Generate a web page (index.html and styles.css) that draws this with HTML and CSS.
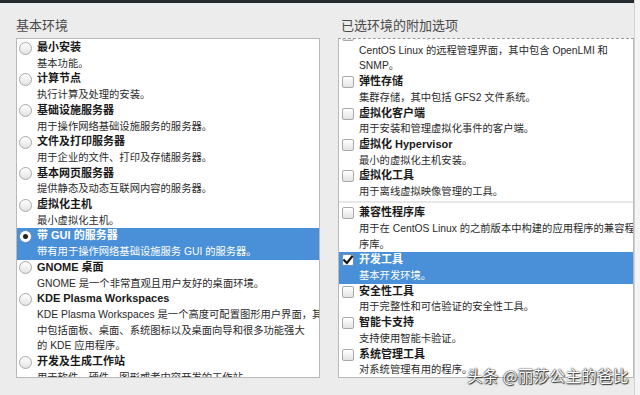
FILE: index.html
```html
<!DOCTYPE html>
<html lang="zh-CN">
<head>
<meta charset="utf-8">
<title>软件选择</title>
<link rel="stylesheet" href="styles.css">
</head>
<body>
<div class="screen">
  <div class="window">
    <div class="topbar"></div>
    <div class="columns">
      <section class="col col-left">
        <h2 class="heading">基本环境</h2>
        <div class="listbox">
          <ul class="list">
            <li class="item"><span class="radio"></span><div class="text"><div class="title">最小安装</div><div class="desc">基本功能。</div></div></li>
            <li class="item"><span class="radio"></span><div class="text"><div class="title">计算节点</div><div class="desc">执行计算及处理的安装。</div></div></li>
            <li class="item"><span class="radio"></span><div class="text"><div class="title">基础设施服务器</div><div class="desc">用于操作网络基础设施服务的服务器。</div></div></li>
            <li class="item"><span class="radio"></span><div class="text"><div class="title">文件及打印服务器</div><div class="desc">用于企业的文件、打印及存储服务器。</div></div></li>
            <li class="item"><span class="radio"></span><div class="text"><div class="title">基本网页服务器</div><div class="desc">提供静态及动态互联网内容的服务器。</div></div></li>
            <li class="item"><span class="radio"></span><div class="text"><div class="title">虚拟化主机</div><div class="desc">最小虚拟化主机。</div></div></li>
            <li class="item is-selected"><span class="radio is-on"></span><div class="text"><div class="title">带 GUI 的服务器</div><div class="desc">带有用于操作网络基础设施服务 GUI 的服务器。</div></div></li>
            <li class="item"><span class="radio"></span><div class="text"><div class="title">GNOME 桌面</div><div class="desc">GNOME 是一个非常直观且用户友好的桌面环境。</div></div></li>
            <li class="item"><span class="radio"></span><div class="text"><div class="title">KDE Plasma Workspaces</div><div class="desc">KDE Plasma Workspaces 是一个高度可配置图形用户界面，其<br>中包括面板、桌面、系统图标以及桌面向导和很多功能强大<br>的 KDE 应用程序。</div></div></li>
            <li class="item"><span class="radio"></span><div class="text"><div class="title">开发及生成工作站</div><div class="desc">用于软件、硬件、图形或者内容开发的工作站。</div></div></li>
          </ul>
        </div>
      </section>
      <section class="col col-right">
        <h2 class="heading">已选环境的附加选项</h2>
        <div class="listbox listbox-scrolled">
          <ul class="list list-scrolled">
            <li class="item"><span class="check"></span><div class="text"><div class="title">Linux 的远程管理</div><div class="desc">CentOS Linux 的远程管理界面，其中包含 OpenLMI 和<br>SNMP。</div></div></li>
            <li class="item"><span class="check"></span><div class="text"><div class="title">弹性存储</div><div class="desc">集群存储，其中包括 GFS2 文件系统。</div></div></li>
            <li class="item"><span class="check"></span><div class="text"><div class="title">虚拟化客户端</div><div class="desc">用于安装和管理虚拟化事件的客户端。</div></div></li>
            <li class="item"><span class="check"></span><div class="text"><div class="title">虚拟化 Hypervisor</div><div class="desc">最小的虚拟化主机安装。</div></div></li>
            <li class="item"><span class="check"></span><div class="text"><div class="title">虚拟化工具</div><div class="desc">用于离线虚拟映像管理的工具。</div></div></li>
            <li class="separator"></li>
            <li class="item"><span class="check"></span><div class="text"><div class="title">兼容性程序库</div><div class="desc">用于在 CentOS Linux 的之前版本中构建的应用程序的兼容程<br>序库。</div></div></li>
            <li class="item is-selected"><span class="check is-on"><svg viewBox="0 0 12 12" width="12" height="12"><path d="M2.2 6.2 L4.9 9 L10 2.6" fill="none" stroke="#1a1a1a" stroke-width="2.2" stroke-linecap="square"/></svg></span><div class="text"><div class="title">开发工具</div><div class="desc">基本开发环境。</div></div></li>
            <li class="item"><span class="check"></span><div class="text"><div class="title">安全性工具</div><div class="desc">用于完整性和可信验证的安全性工具。</div></div></li>
            <li class="item"><span class="check"></span><div class="text"><div class="title">智能卡支持</div><div class="desc">支持使用智能卡验证。</div></div></li>
            <li class="item"><span class="check"></span><div class="text"><div class="title">系统管理工具</div><div class="desc">对系统管理有用的程序。</div></div></li>
          </ul>
        </div>
      </section>
    </div>
  </div>
  <div class="edge"></div>
  <div class="watermark">头条 @丽莎公主的爸比</div>
</div>
</body>
</html>
```

FILE: styles.css
```css
* { box-sizing: border-box; }

html, body {
  margin: 0;
  padding: 0;
}

body {
  width: 640px;
  height: 395px;
  overflow: hidden;
  background: #ededed;
  font-family: "Liberation Sans", "Noto Sans CJK SC", sans-serif;
  color: #1e1e1e;
}

.screen {
  position: relative;
  display: flex;
  width: 640px;
  height: 395px;
}

.window {
  width: 634px;
  height: 395px;
  background: #ececec;
}

.edge {
  width: 6px;
  height: 395px;
  background: #f4f4f4;
  border-left: 1px solid #d2d2d2;
}

.topbar {
  height: 3px;
  background: #232b31;
}

.columns {
  display: flex;
  gap: 18px;
  padding-left: 16px;
}

.col-left { width: 304px; }
.col-right { width: 296px; }

.heading {
  margin: 15px 0 5px 0;
  font-size: 13px;
  line-height: 15px;
  font-weight: normal;
  color: #4a4a4a;
}

.col-right .heading { padding-left: 3px; }

.listbox {
  height: 340px;
  background: #fff;
  border: 1px solid #b9b9b9;
  overflow: hidden;
}

.listbox-scrolled {
  border-top: 1px dashed #9a9a9a;
}

.list {
  list-style: none;
  margin: 0;
  padding: 1px 0 0 0;
}

.list-scrolled {
  margin-top: -13px;
}

.item {
  display: flex;
  align-items: flex-start;
  padding-left: 1px;
  white-space: nowrap;
}

.text {
  flex: 1;
  min-width: 0;
  overflow: hidden;
}

.title {
  font-size: 11px;
  line-height: 15.7px;
  font-weight: bold;
  color: #1a1a1a;
}

.desc {
  font-size: 10.3px;
  line-height: 15.7px;
  color: #2a2a2a;
}

.is-selected {
  background: #4a90d9;
}

.is-selected .title,
.is-selected .desc {
  color: #fff;
}

.radio {
  flex: none;
  position: relative;
  width: 13px;
  height: 13px;
  margin: 1.5px 5px 0 1px;
  border: 1px solid #a9a9a9;
  border-radius: 50%;
  background: linear-gradient(#ffffff, #e3e3e3);
}

.radio.is-on {
  background: #fff;
  border-color: #6a8fb8;
}

.radio.is-on::after {
  content: "";
  position: absolute;
  left: 3px;
  top: 3px;
  width: 5px;
  height: 5px;
  border-radius: 50%;
  background: #222;
}

.check {
  flex: none;
  display: flex;
  width: 12px;
  height: 12px;
  margin: 2px 5px 0 2px;
  border: 1px solid #a9a9a9;
  border-radius: 2px;
  background: linear-gradient(#ffffff, #e3e3e3);
}

.check.is-on {
  background: #fff;
  border-color: #6a8fb8;
}

.check svg {
  margin: -1px;
}

.separator {
  height: 5.5px;
  border-bottom: 1px solid #d0d0d0;
  transform: translateY(-2.5px);
}

.watermark {
  position: absolute;
  right: 11px;
  bottom: 10px;
  font-family: "Noto Sans CJK SC", sans-serif;
  font-size: 15.5px;
  line-height: 19px;
  color: #ffffff;
  letter-spacing: 0.4px;
  text-shadow: 0 0 1px #222, 0 0 2px #444, 1px 1px 1px #333;
}
```
